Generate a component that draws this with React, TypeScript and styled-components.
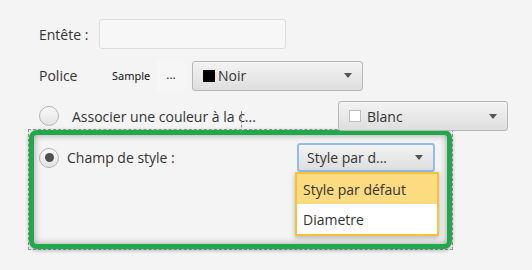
import React from "react";
import styled, { createGlobalStyle } from "styled-components";

const Global = createGlobalStyle`
  html, body { margin: 0; padding: 0; }
  body {
    background: #f4f4f4;
    font-family: "Open Sans", "Noto Sans", sans-serif;
    font-size: 14px;
    color: #333333;
    width: 532px;
    height: 270px;
    overflow: hidden;
  }
`;

const Page = styled.div`
  display: flex;
  flex-direction: column;
  padding-top: 19px;
`;

const Row = styled.div<{ $top?: number; $h: number }>`
  position: relative;
  display: flex;
  align-items: center;
  height: ${(p) => p.$h}px;
  margin-top: ${(p) => p.$top ?? 0}px;
  padding-left: 39px;
`;

const Label = styled.span<{ $w?: number }>`
  display: inline-block;
  width: ${(p) => (p.$w ? `${p.$w}px` : "auto")};
  white-space: nowrap;
  color: #333;
`;

const TextInput = styled.div`
  box-sizing: border-box;
  width: 187px;
  height: 30px;
  border: 1px solid #dcdcdc;
  border-radius: 3px;
  background: #f7f7f7;
`;

const Sample = styled.span`
  font-family: "Noto Sans", sans-serif;
  font-size: 11px;
  color: #111;
  width: 55px;
`;

const DotsButton = styled.div`
  box-sizing: border-box;
  width: 28px;
  height: 31px;
  margin-left: -10px;
  margin-right: 7px;
  display: flex;
  align-items: center;
  justify-content: center;
  background: #f6f6f6;
  font-size: 12px;
  color: #222;
  padding-bottom: 3px;
`;

const Combo = styled.div<{ $w: number; $focused?: boolean }>`
  position: relative;
  box-sizing: border-box;
  width: ${(p) => p.$w}px;
  height: ${(p) => (p.$focused ? 29 : 30)}px;
  display: flex;
  align-items: center;
  padding: 0 10px 0 ${(p) => (p.$focused ? 8 : 10)}px;
  border: ${(p) => (p.$focused ? "2px solid #92bcf1" : "1px solid #b8b8b8")};
  border-radius: 3px;
  background: linear-gradient(#f3f3f3, #dedede);
  color: #333;
  white-space: nowrap;
`;

const Swatch = styled.span<{ $c: string }>`
  width: 10px;
  height: 10px;
  margin-right: 3px;
  background: ${(p) => p.$c};
  border: 1px solid ${(p) => (p.$c === "#000" ? "#000" : "#bdbdbd")};
  box-sizing: ${(p) => (p.$c === "#000" ? "content-box" : "border-box")};
  ${(p) => (p.$c === "#000" ? "" : "width: 12px; height: 12px; margin-right: 6px;")}
`;

const ComboText = styled.span`
  flex: 1;
`;

const Arrow = styled.span`
  width: 0;
  height: 0;
  border-left: 4px solid transparent;
  border-right: 4px solid transparent;
  border-top: 5px solid #555;
`;

const Radio = styled.span<{ $on?: boolean }>`
  position: relative;
  box-sizing: border-box;
  flex: none;
  width: 20px;
  height: 20px;
  border-radius: 50%;
  border: 1px solid #b5b5b5;
  background: linear-gradient(#fbfbfb, #e2e2e2);
  &::after {
    content: "";
    display: ${(p) => (p.$on ? "block" : "none")};
    position: absolute;
    left: 4.5px;
    top: 4.5px;
    width: 9px;
    height: 9px;
    border-radius: 50%;
    background: #4f4f4f;
  }
`;

const RadioLabel = styled.span<{ $gap: number }>`
  margin-left: ${(p) => p.$gap}px;
  white-space: nowrap;
  color: #333;
`;

const FocusDash = styled.span`
  position: absolute;
  left: 241px;
  top: 10px;
  height: 21px;
  border-left: 1px dashed #8a8a8a;
`;

const Spacer = styled.span`
  flex: 1;
`;

const Frame = styled.div`
  box-sizing: border-box;
  margin: -2px 0 0 28px;
  width: 425px;
  height: 121px;
  border: 1px dashed #9a9a9a;
`;

const GreenBox = styled.div`
  box-sizing: border-box;
  width: 100%;
  height: 100%;
  border: 5px solid #1fa94a;
  border-radius: 8px;
  background: #f4f4f4;
  box-shadow: inset 0 0 7px rgba(0, 0, 0, 0.35), 0 1px 4px rgba(0, 0, 0, 0.35);
  padding: 8px 12px 0 5px;
`;

const InnerRow = styled.div`
  display: flex;
  align-items: center;
  height: 29px;
`;

const ComboWrap = styled.div`
  position: relative;
`;

const Popup = styled.ul`
  position: absolute;
  left: -2px;
  top: 29px;
  box-sizing: border-box;
  width: 144px;
  margin: 0;
  padding: 0;
  list-style: none;
  border: 2px solid #f6c23c;
  background: #fff;
  box-shadow: 0 2px 5px rgba(0, 0, 0, 0.25);
  z-index: 5;
`;

const Item = styled.li<{ $sel?: boolean }>`
  height: 30px;
  display: flex;
  align-items: center;
  padding-left: 6px;
  background: ${(p) => (p.$sel ? "#fddb81" : "#fff")};
  color: #333;
  white-space: nowrap;
`;

export default function App() {
  return (
    <>
      <Global />
      <Page>
        <Row $h={30}>
          <Label $w={60}>Entête :</Label>
          <TextInput />
        </Row>
        <Row $h={31} $top={11}>
          <Label $w={73}>Police</Label>
          <Sample>Sample</Sample>
          <DotsButton>...</DotsButton>
          <Combo $w={171}>
            <Swatch $c="#000" />
            <ComboText>Noir</ComboText>
            <Arrow />
          </Combo>
        </Row>
        <Row $h={30} $top={10}>
          <Radio />
          <RadioLabel $gap={13}>Associer une couleur à la c...</RadioLabel>
          <FocusDash />
          <Spacer />
          <Combo $w={170} style={{ marginRight: 24 }}>
            <Swatch $c="#fff" />
            <ComboText>Blanc</ComboText>
            <Arrow />
          </Combo>
        </Row>
        <Frame>
          <GreenBox>
            <InnerRow>
              <Radio $on />
              <RadioLabel $gap={8}>Champ de style :</RadioLabel>
              <Spacer />
              <ComboWrap>
                <Combo $w={138} $focused>
                  <ComboText>Style par d...</ComboText>
                  <Arrow />
                </Combo>
                <Popup>
                  <Item $sel>Style par défaut</Item>
                  <Item>Diametre</Item>
                </Popup>
              </ComboWrap>
            </InnerRow>
          </GreenBox>
        </Frame>
      </Page>
    </>
  );
}
